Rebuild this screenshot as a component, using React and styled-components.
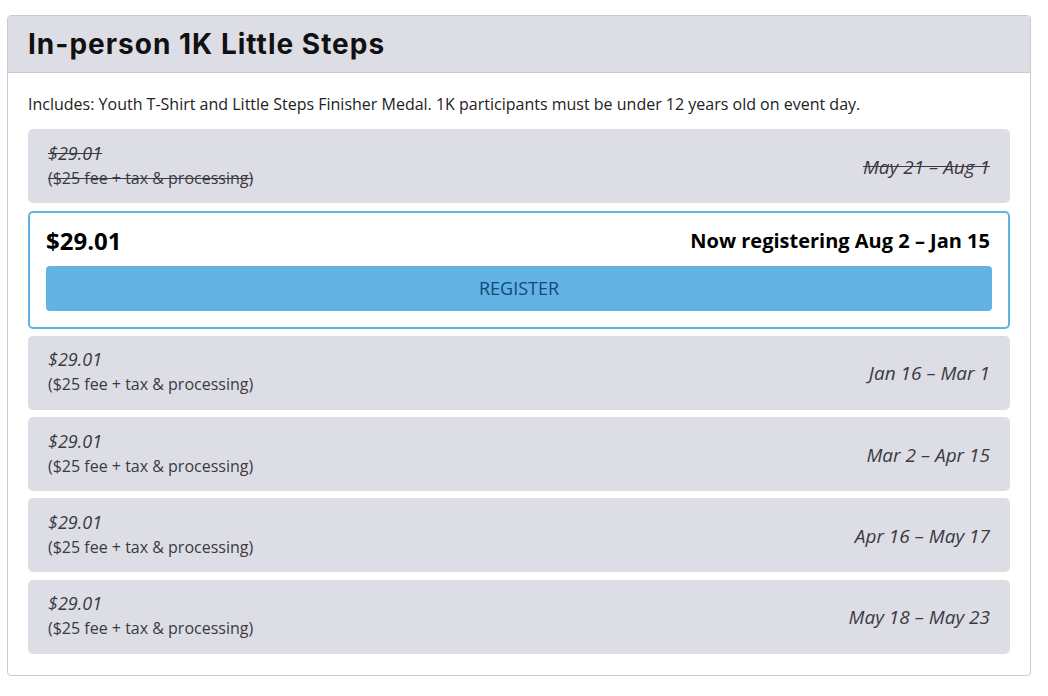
import React from "react";
import styled, { createGlobalStyle } from "styled-components";

const GlobalStyle = createGlobalStyle`
  body {
    margin: 0;
    background: #fff;
    font-family: "Open Sans", "Liberation Sans", sans-serif;
    color: #222;
  }
`;

const Page = styled.div`
  padding: 15px 0 20px 7px;
`;

const Card = styled.section`
  width: 1024px;
  box-sizing: border-box;
  border: 1px solid #c9c9ce;
  border-radius: 4px;
  overflow: hidden;
`;

const Header = styled.header`
  height: 56px;
  background: #dddde5;
  border-bottom: 1px solid #c9c9ce;
  display: flex;
  align-items: center;
  padding: 0 20px;
`;

const Title = styled.h2`
  margin: 0;
  font-family: Inter, "Noto Sans", sans-serif;
  font-weight: 700;
  font-size: 28px;
  color: #111;
  letter-spacing: 1px;
`;

const Body = styled.div`
  padding: 19px 20px 21px;
  display: flex;
  flex-direction: column;
  gap: 7.3px;
`;

const Description = styled.p`
  margin: 0 0 6px;
  font-size: 16px;
  line-height: 24px;
  color: #222;
`;

const Tier = styled.div`
  background: #dddde5;
  border-radius: 5px;
  padding: 11.5px 20px 12.5px;
  display: flex;
  justify-content: space-between;
  align-items: center;
  color: #3a3a3f;
  text-decoration: ${(p) => (p.$past ? "line-through" : "none")};
`;

const TierInfo = styled.div`
  display: flex;
  flex-direction: column;
`;

const Price = styled.span`
  font-style: italic;
  font-size: 18px;
  line-height: 24px;
`;

const Fee = styled.span`
  font-size: 16px;
  line-height: 26px;
`;

const Dates = styled.span`
  font-style: italic;
  font-size: 19px;
  padding-top: 2px;
`;

const Active = styled.div`
  border: 2px solid #61b3e2;
  border-radius: 5px;
  padding: 13px 16px 16px;
  display: flex;
  flex-direction: column;
  gap: 10px;
`;

const ActiveTop = styled.div`
  display: flex;
  justify-content: space-between;
  align-items: center;
  color: #000;
  font-weight: 700;
`;

const ActivePrice = styled.span`
  font-size: 24px;
  line-height: 30px;
`;

const ActiveDates = styled.span`
  font-size: 20px;
  padding-right: 2px;
`;

const RegisterButton = styled.button`
  height: 45px;
  border: none;
  border-radius: 4px;
  background: #62b3e3;
  color: #104a7a;
  font-family: "Open Sans", sans-serif;
  font-size: 18px;
  cursor: pointer;
`;

const tiers = [
  { dates: "Jan 16 – Mar 1" },
  { dates: "Mar 2 – Apr 15" },
  { dates: "Apr 16 – May 17" },
  { dates: "May 18 – May 23" },
];

const PriceTier = ({ dates, past }) => (
  <Tier $past={past}>
    <TierInfo>
      <Price>$29.01</Price>
      <Fee>($25 fee + tax &amp; processing)</Fee>
    </TierInfo>
    <Dates>{dates}</Dates>
  </Tier>
);

export default function App() {
  return (
    <Page>
      <GlobalStyle />
      <Card>
        <Header>
          <Title>In-person 1K Little Steps</Title>
        </Header>
        <Body>
          <Description>
            Includes: Youth T-Shirt and Little Steps Finisher Medal. 1K participants must be under 12 years old on event day.
          </Description>
          <PriceTier dates="May 21 – Aug 1" past />
          <Active>
            <ActiveTop>
              <ActivePrice>$29.01</ActivePrice>
              <ActiveDates>Now registering Aug 2 – Jan 15</ActiveDates>
            </ActiveTop>
            <RegisterButton>REGISTER</RegisterButton>
          </Active>
          {tiers.map((t) => (
            <PriceTier key={t.dates} dates={t.dates} />
          ))}
        </Body>
      </Card>
    </Page>
  );
}
